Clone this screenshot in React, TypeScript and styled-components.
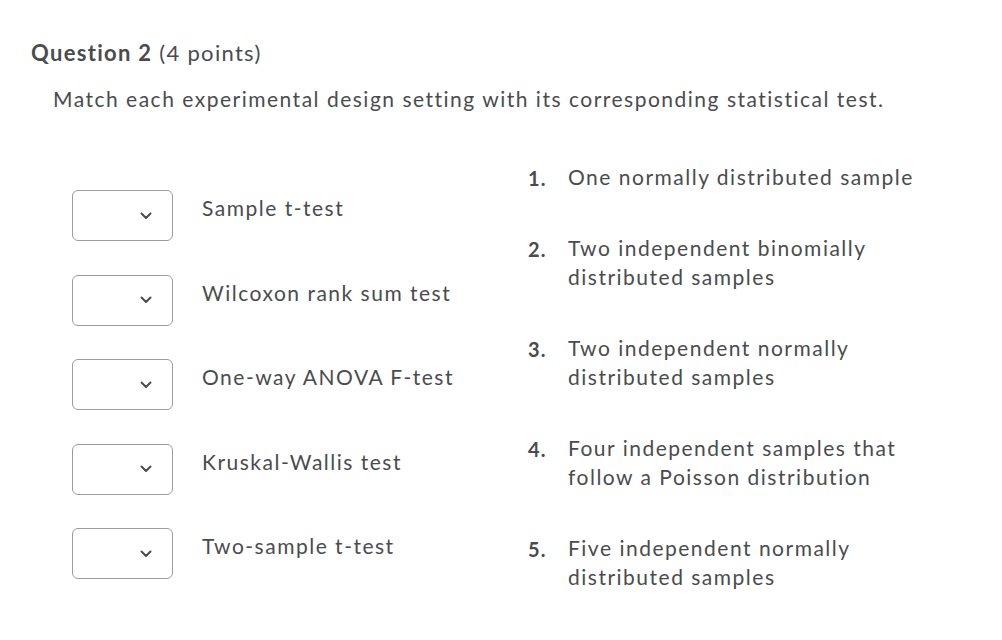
import styled, { createGlobalStyle } from "styled-components";

const GlobalStyle = createGlobalStyle`
  body {
    margin: 0;
    background: #ffffff;
    font-family: Lato, "Open Sans", sans-serif;
    color: #494c4e;
  }
`;

const settings = [
  "Sample t-test",
  "Wilcoxon rank sum test",
  "One-way ANOVA F-test",
  "Kruskal-Wallis test",
  "Two-sample t-test",
];

const choices = [
  "One normally distributed sample",
  "Two independent binomially distributed samples",
  "Two independent normally distributed samples",
  "Four independent samples that follow a Poisson distribution",
  "Five independent normally distributed samples",
];

function Chevron() {
  return (
    <svg width="12" height="8" viewBox="0 0 12 8">
      <path
        d="M1.5 1.5 L6 6 L10.5 1.5"
        fill="none"
        stroke="#494c4e"
        strokeWidth="2"
        strokeLinecap="round"
        strokeLinejoin="round"
      />
    </svg>
  );
}

export default function App() {
  return (
    <Page>
      <GlobalStyle />
      <Title>
        <strong>Question 2</strong> (4 points)
      </Title>
      <Prompt>
        Match each experimental design setting with its corresponding
        statistical test.
      </Prompt>
      <Columns>
        <LeftList>
          {settings.map((s) => (
            <MatchRow key={s}>
              <SelectBox>
                <Chevron />
              </SelectBox>
              <RowLabel>{s}</RowLabel>
            </MatchRow>
          ))}
        </LeftList>
        <RightList>
          {choices.map((c, i) => (
            <Choice key={c}>
              <ChoiceNum>{i + 1}.</ChoiceNum>
              <ChoiceText>{c}</ChoiceText>
            </Choice>
          ))}
        </RightList>
      </Columns>
    </Page>
  );
}

const Page = styled.div`
  padding: 38px 0 0 31px;
  width: 1002px;
  height: 640px;
  box-sizing: border-box;
`;

const Title = styled.h2`
  margin: 0;
  font-size: 22px;
  font-weight: 400;
  line-height: 30px;
  letter-spacing: 1.3px;

  strong {
    font-weight: 700;
  }
`;

const Prompt = styled.p`
  margin: 16px 0 0 22px;
  font-size: 21px;
  line-height: 30px;
  letter-spacing: 1.5px;
`;

const Columns = styled.div`
  display: flex;
  margin-top: 48px;
  padding-left: 41px;
`;

const LeftList = styled.div`
  display: flex;
  flex-direction: column;
  gap: 33.5px;
  width: 456px;
  padding-top: 28px;
`;

const MatchRow = styled.div`
  display: flex;
  align-items: flex-start;
  gap: 29px;
`;

const SelectBox = styled.div`
  width: 101px;
  height: 51px;
  box-sizing: border-box;
  border: 1px solid #9c9c9c;
  border-radius: 6px;
  display: flex;
  align-items: center;
  justify-content: flex-end;
  padding-right: 20px;
  background: #fff;
`;

const RowLabel = styled.span`
  font-size: 21px;
  line-height: 30px;
  margin-top: 3px;
  letter-spacing: 1.5px;
`;

const RightList = styled.ol`
  list-style: none;
  margin: 0;
  padding: 0;
  display: flex;
  flex-direction: column;
  gap: 42px;
`;

const Choice = styled.li`
  display: flex;
  align-items: flex-start;
`;

const ChoiceNum = styled.span`
  width: 40px;
  flex-shrink: 0;
  font-size: 20px;
  font-weight: 700;
  line-height: 26px;
  padding-top: 3px;
  letter-spacing: 1.2px;
`;

const ChoiceText = styled.span`
  width: 362px;
  font-size: 21px;
  line-height: 29px;
  letter-spacing: 1.5px;
`;
